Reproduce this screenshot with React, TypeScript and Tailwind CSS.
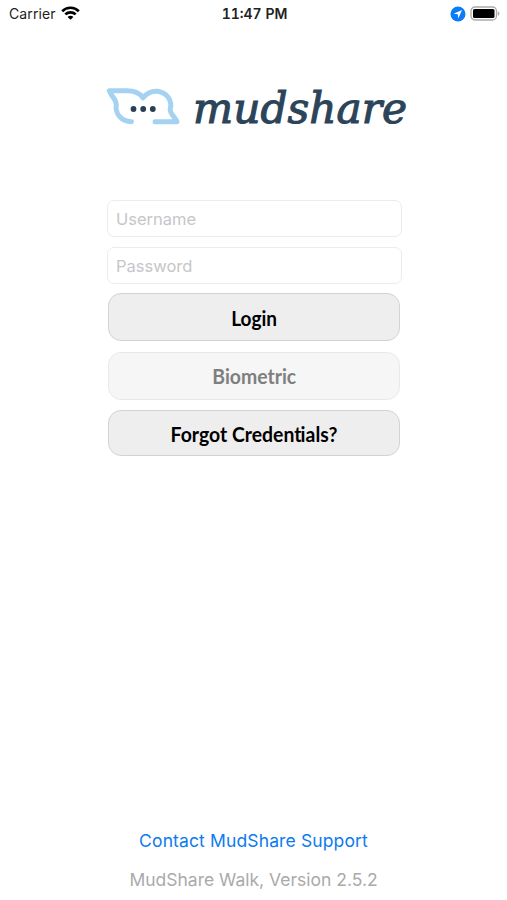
import React from "react";

function StatusBar() {
  return (
    <header className="grid h-7 grid-cols-3 items-center pl-[9px] pr-[7px] text-[14px] leading-7 text-[#222]">
      <div className="flex items-center gap-[5px]">
        <span className="tracking-[0.1px]">Carrier</span>
        <svg className="-mt-[3px]" width="19" height="14" viewBox="0 0 19 14" fill="none" stroke="#000" strokeWidth="2.7">
          <path d="M1.2 5.2C5.7.6 13.3.6 17.8 5.2" />
          <path d="M4.3 8.4c2.9-2.8 7.5-2.8 10.4 0" />
          <path d="M9.5 13.8 6.6 10.9c1.6-1.5 4.2-1.5 5.8 0Z" fill="#000" stroke="none" />
        </svg>
      </div>
      <span className="whitespace-nowrap text-center font-semibold tabular-nums tracking-[0px]">11:47 PM</span>
      <div className="-mt-px flex items-center justify-end gap-[4px]">
        <svg width="16" height="16" viewBox="0 0 16 16">
          <circle cx="8" cy="8" r="7.5" fill="#0b7bf7" />
          <path d="M12 4 3.6 7.8l4.2.5.5 4.2Z" fill="#fff" />
        </svg>
        <svg width="30" height="15" viewBox="0 0 30 15">
          <rect x="1" y="1" width="25.5" height="13" rx="4" fill="#fff" stroke="#aaa" strokeWidth="1.3" />
          <rect x="3" y="3" width="21.5" height="9" rx="1.5" fill="#000" />
          <path d="M27.8 5.2c2.2.8 2.2 3.8 0 4.6Z" fill="#aaa" />
        </svg>
      </div>
    </header>
  );
}

function Logo() {
  return (
    <svg className="block" width="304" height="52" viewBox="105 80 304 52" role="img" aria-label="mudshare">
      <g fill="none" stroke="#a5d2f0" strokeWidth="5" strokeLinejoin="round" strokeLinecap="round">
        <path d="M131.5 121.7C121 121.3 114.8 113.5 116.3 104.5C116.3 99 112.5 98.5 109.3 90.8H126C134 90.7 139.5 92.5 143 97.8C147 92.5 152 90.8 157.5 91.2C167.5 92.5 172.5 101 170.2 109.5C170.2 114.5 175 116.5 177 121.7H155" />
      </g>
      <g fill="#293f54">
        <circle cx="133.5" cy="109" r="2.9" />
        <circle cx="143.2" cy="109" r="2.9" />
        <circle cx="152.8" cy="109" r="2.9" />
      </g>
      <text
        x="193"
        y="122.5"
        textLength="214"
        lengthAdjust="spacingAndGlyphs"
        className="fill-[#2c4459] stroke-[#2c4459] font-['DejaVu_Serif',serif] text-[42px] italic"
        strokeWidth="1.1"
      >
        mudshare
      </text>
    </svg>
  );
}

const field =
  "block w-[295px] rounded-[7px] border border-[#ececec] bg-white px-2 text-[16.5px] text-[#222] outline-none placeholder:text-[#c6c6c8] placeholder:opacity-100";
const button =
  "flex w-[292px] items-center justify-center rounded-[13px] border-[1.5px] font-['Lato',sans-serif] text-[20px] font-bold";

export default function App() {
  return (
    <main className="flex h-[900px] w-[507px] flex-col bg-white font-['Inter',sans-serif]">
      <StatusBar />
      <div className="mt-[52px] pl-[105px]">
        <Logo />
      </div>
      <form className="ml-[107px] mt-[68px] flex flex-col" onSubmit={(e) => e.preventDefault()}>
        <input className={`${field} h-[37px]`} placeholder="Username" />
        <input className={`${field} mt-[10px] h-[37px]`} type="password" placeholder="Password" />
        <button className={`${button} ml-px mt-[9px] h-[48px] border-[#d3d3d3] bg-[#eee] pt-[2px] text-black`}>
          <span className="scale-x-[0.95]">Login</span>
        </button>
        <button disabled className={`${button} ml-px mt-[11px] h-[48px] border-[#e9e9e9] bg-[#f6f6f6] text-[#7f7f7f]`}>
          <span className="scale-x-[0.97]">Biometric</span>
        </button>
        <button className={`${button} ml-px mt-[10px] h-[46px] border-[#d3d3d3] bg-[#eee] pt-[2px] text-black`}>
          <span className="scale-x-[0.97]">
            Forgot Creden<span className="tracking-[-1px]">t</span>ials?
          </span>
        </button>
      </form>
      <footer className="mt-auto flex flex-col items-center pb-[7px] text-[17.5px]">
        <a href="#support" className="leading-[26px] tracking-[0.13px] text-[#0b7bf0]">Contact MudShare Support</a>
        <p className="mt-[13px] leading-[26px] text-[#aaa]">MudShare Walk, Version 2.5.2</p>
      </footer>
    </main>
  );
}
